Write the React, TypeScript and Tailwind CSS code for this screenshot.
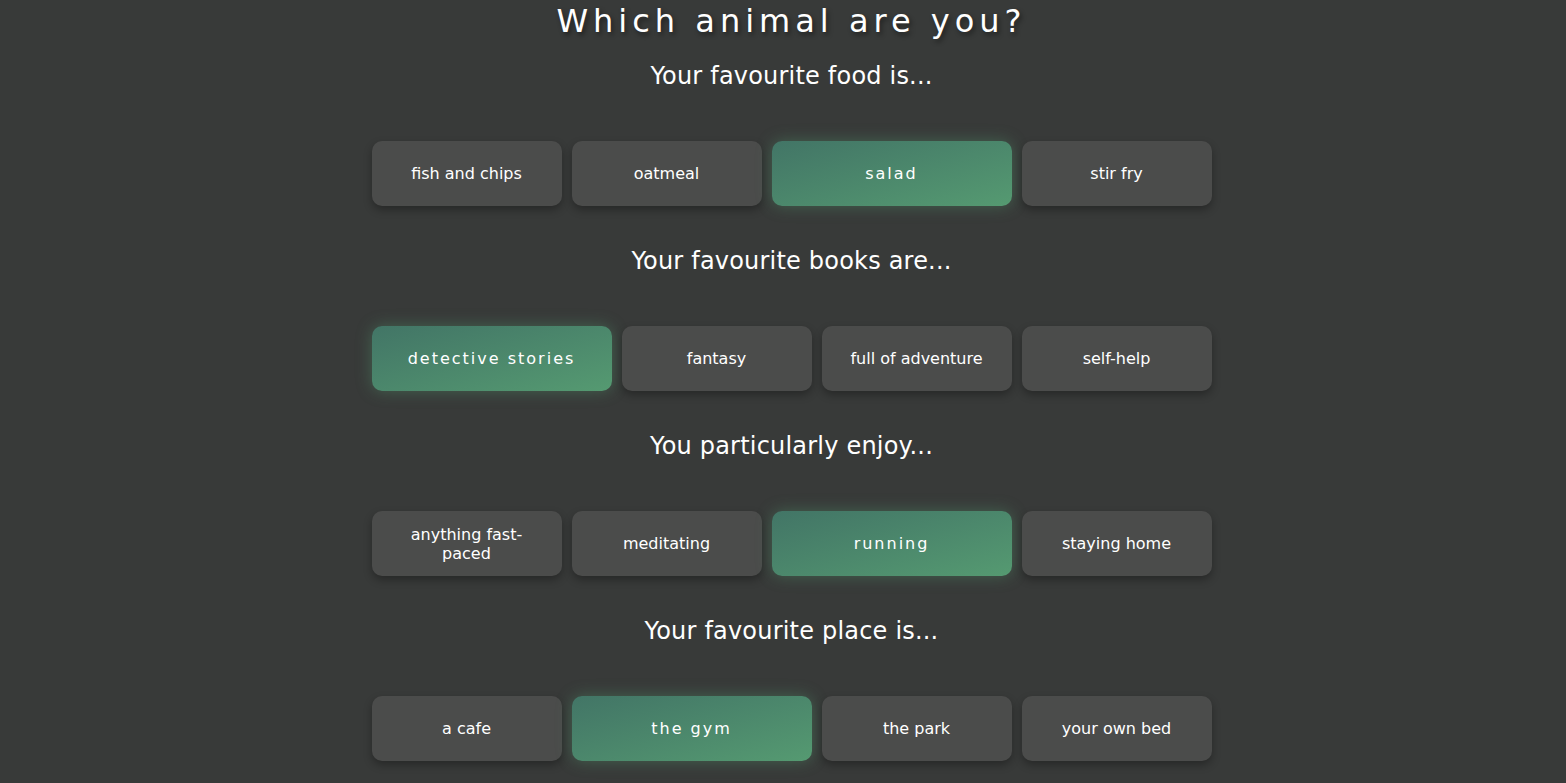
const questions = [
  {
    title: "Your favourite food is...",
    options: ["fish and chips", "oatmeal", "salad", "stir fry"],
    selected: "salad",
  },
  {
    title: "Your favourite books are...",
    options: ["detective stories", "fantasy", "full of adventure", "self-help"],
    selected: "detective stories",
  },
  {
    title: "You particularly enjoy...",
    options: ["anything fast-paced", "meditating", "running", "staying home"],
    selected: "running",
  },
  {
    title: "Your favourite place is...",
    options: ["a cafe", "the gym", "the park", "your own bed"],
    selected: "the gym",
  },
];

function Option({ label, active }: { label: string; active: boolean }) {
  if (active) {
    return (
      <button className="h-[65px] w-[240px] rounded-[10px] bg-gradient-to-br from-[#427566] to-[#559a71] px-6 text-[16px] tracking-[2px] text-white shadow-[0_0_16px_rgba(85,160,115,0.4)]">
        {label}
      </button>
    );
  }
  return (
    <button className="h-[65px] w-[190px] rounded-[10px] bg-[#4b4c4b] px-6 text-[16px] leading-[19px] text-white shadow-[0_4px_8px_rgba(0,0,0,0.3)]">
      {label}
    </button>
  );
}

export default function App() {
  return (
    <div className="min-h-screen bg-[#383a39] pb-6 pl-[17px] text-white font-['DejaVu_Sans',Verdana,sans-serif]">
      <h1 className="pt-[2px] text-center text-[32px] leading-[38px] tracking-[5px] [text-shadow:2px_3px_5px_rgba(0,0,0,0.45)]">
        Which animal are you?
      </h1>
      <div className="mt-[21px] flex flex-col items-center gap-[40px]">
        {questions.map((q) => (
          <section key={q.title} className="flex flex-col items-center">
            <h2 className="text-[24px] leading-[30px] tracking-[0.2px]">{q.title}</h2>
            <div className="mt-[50px] flex gap-[10px]">
              {q.options.map((o) => (
                <Option key={o} label={o} active={o === q.selected} />
              ))}
            </div>
          </section>
        ))}
      </div>
    </div>
  );
}
